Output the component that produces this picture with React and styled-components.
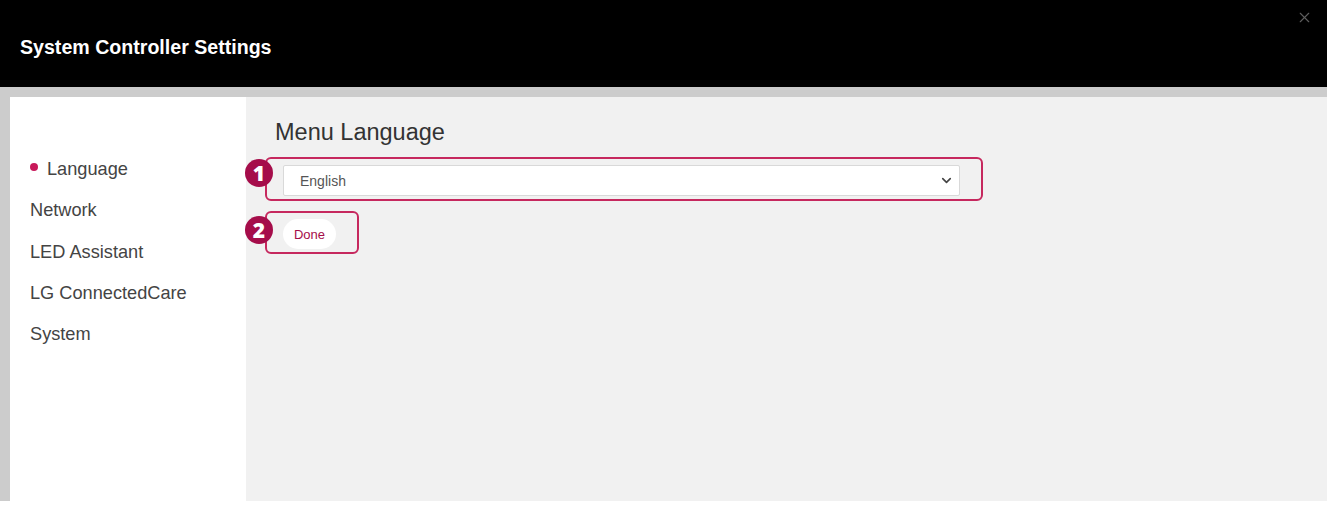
import styled, { createGlobalStyle } from "styled-components";
import { X, ChevronDown } from "lucide-react";

const PINK = "#c6285e";
const DARK_PINK = "#a50d4a";

const NAV_ITEMS = ["Language", "Network", "LED Assistant", "LG ConnectedCare", "System"];

export default function App() {
  return (
    <>
      <GlobalStyle />
      <Page>
        <Header>
          <Title>System Controller Settings</Title>
          <CloseButton aria-label="close">
            <X size={17} strokeWidth={1.6} />
          </CloseButton>
        </Header>
        <Body>
          <Sidebar>
            {NAV_ITEMS.map((item, i) => (
              <NavItem key={item} $active={i === 0}>
                {item}
              </NavItem>
            ))}
          </Sidebar>
          <Content>
            <SectionTitle>Menu Language</SectionTitle>
            <Callout $width="718px" $gap="10px">
              <Badge $top="0px">1</Badge>
              <SelectWrap>
                <Select defaultValue="English">
                  <option>English</option>
                </Select>
                <Chevron>
                  <ChevronDown size={15} strokeWidth={2.6} />
                </Chevron>
              </SelectWrap>
            </Callout>
            <Callout $width="94px">
              <Badge $top="3px">2</Badge>
              <DoneButton>Done</DoneButton>
            </Callout>
          </Content>
        </Body>
      </Page>
    </>
  );
}

const GlobalStyle = createGlobalStyle`
  html, body {
    margin: 0;
    padding: 0;
    background: #fff;
  }
  * {
    box-sizing: border-box;
  }
`;

const Page = styled.div`
  width: 1327px;
  height: 508px;
  display: flex;
  flex-direction: column;
  font-family: "Liberation Sans", Arial, sans-serif;
  background: #fff;
`;

const Header = styled.header`
  height: 87px;
  background: #000;
  display: flex;
  justify-content: space-between;
  align-items: flex-start;
  padding: 0 0 0 20px;
`;

const Title = styled.h1`
  margin: 34px 0 0;
  font-size: 19.6px;
  line-height: 26px;
  font-weight: bold;
  color: #fff;
`;

const CloseButton = styled.button`
  margin: 9px 14px 0 0;
  padding: 0;
  border: 0;
  background: none;
  color: #5e5e5e;
  display: flex;
`;

const Body = styled.div`
  height: 414px;
  background: #cccccc;
  padding: 10px 0 0 10px;
  display: flex;
`;

const Sidebar = styled.nav`
  width: 236px;
  background: #fff;
  padding: 52px 0 0 20px;
  display: flex;
  flex-direction: column;
`;

const NavItem = styled.div`
  font-size: 18.2px;
  line-height: 41.3px;
  color: #444;
  display: flex;
  align-items: center;

  &::before {
    content: "";
    display: ${(p) => (p.$active ? "block" : "none")};
    width: 8px;
    height: 8px;
    border-radius: 50%;
    background: #c8195a;
    margin: 0 9px -1px 0;
    transform: translateY(-3px);
  }
`;

const Content = styled.main`
  flex: 1;
  background: #f1f1f1;
  padding: 19px 0 0 19px;
  display: flex;
  flex-direction: column;
  align-items: flex-start;
`;

const SectionTitle = styled.h2`
  margin: 0 0 9px 10px;
  font-size: 23.5px;
  line-height: 32px;
  font-weight: normal;
  color: #333;
`;

const Callout = styled.div`
  position: relative;
  width: ${(p) => p.$width};
  border: 2px solid ${PINK};
  border-radius: 6px;
  padding: 6px 0 3px 16px;
  margin-bottom: ${(p) => p.$gap || "0"};
`;

const Badge = styled.span`
  position: absolute;
  left: -22px;
  top: ${(p) => p.$top};
  width: 28px;
  height: 28px;
  border-radius: 50%;
  background: ${DARK_PINK};
  color: #fff;
  font-family: "Open Sans", sans-serif;
  font-weight: 800;
  font-size: 21px;
  line-height: 28px;
  text-align: center;
`;

const SelectWrap = styled.div`
  position: relative;
  width: 677px;
`;

const Select = styled.select`
  display: block;
  appearance: none;
  width: 100%;
  height: 31px;
  border: 1px solid #d9d9d9;
  border-radius: 2px;
  background: #fff;
  padding: 0 0 0 16px;
  font-family: "Liberation Sans", Arial, sans-serif;
  font-size: 14px;
  color: #555;
`;

const Chevron = styled.span`
  position: absolute;
  right: 6px;
  top: 8px;
  color: #444;
  display: flex;
  pointer-events: none;
`;

const DoneButton = styled.button`
  display: block;
  width: 53px;
  height: 30px;
  border: 0;
  border-radius: 15px;
  background: #fff;
  color: ${DARK_PINK};
  font-family: "Liberation Sans", Arial, sans-serif;
  font-size: 13px;
  padding: 0;
`;
